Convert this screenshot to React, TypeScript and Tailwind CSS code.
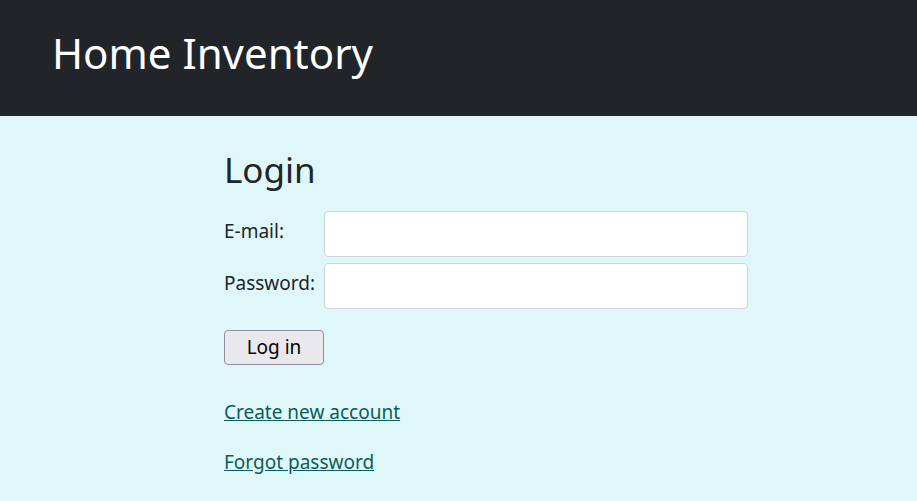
export default function App() {
  return (
    <div className="min-h-[501px] bg-[#e0f7f9] text-[#212529]" style={{ fontFamily: '"Noto Sans", "Open Sans", sans-serif' }}>
      <header className="flex h-[116px] items-center bg-[#212529] pb-[10px] pl-[52px]">
        <h1 className="text-[42px] leading-none text-white">Home Inventory</h1>
      </header>
      <main className="pl-[224px] pt-[34px]">
        <h2 className="text-[35px] leading-[40px]">Login</h2>
        <form className="mt-[21px] w-[524px]" onSubmit={(e) => e.preventDefault()}>
          <div className="flex items-center">
            <label className="w-[100px] text-[19px] -mt-[6px]">E-mail:</label>
            <input type="email" className="h-[46px] flex-1 rounded-[4px] border border-[#ced4da] bg-white px-3" />
          </div>
          <div className="mt-[6px] flex items-center">
            <label className="w-[100px] text-[19px] -mt-[6px]">Password:</label>
            <input type="password" className="h-[46px] flex-1 rounded-[4px] border border-[#ced4da] bg-white px-3" />
          </div>
          <button type="submit" className="mt-[21px] h-[35px] w-[100px] rounded-[4px] border border-[#8f8f9d] bg-[#e9e9ed] text-[19px] text-black">Log in</button>
        </form>
        <div className="mt-[34px] text-[19px] leading-[26px]">
          <a href="#" className="text-[#0a5c5c] underline">Create new account</a>
        </div>
        <div className="mt-[24px] text-[19px] leading-[26px]">
          <a href="#" className="text-[#0a5c5c] underline">Forgot password</a>
        </div>
      </main>
    </div>
  );
}
